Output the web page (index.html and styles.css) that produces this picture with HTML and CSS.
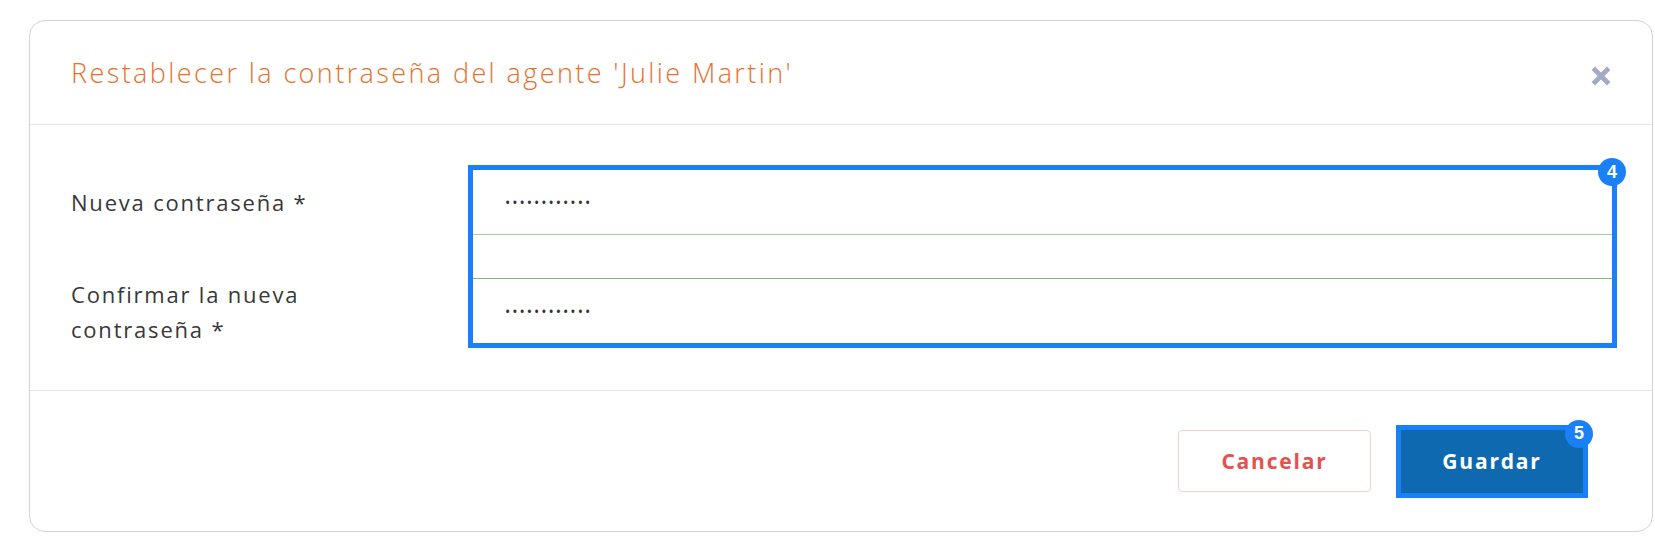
FILE: index.html
```html
<!DOCTYPE html>
<html lang="es">
<head>
  <meta charset="UTF-8">
  <title>Restablecer contraseña</title>
  <link rel="stylesheet" href="styles.css">
</head>
<body>
  <div class="modal">
    <div class="modal-header">
      <h3 class="modal-title">Restablecer la contraseña del agente 'Julie Martin'</h3>
      <button class="close-btn" title="Cerrar">
        <svg width="20" height="20" viewBox="0 0 20 20"><path d="M4 4 L16 16 M16 4 L4 16" stroke="#a2a9c9" stroke-width="4.8" stroke-linecap="square"/></svg>
      </button>
    </div>

    <div class="modal-body">
      <div class="labels">
        <label for="pass1">Nueva contraseña *</label>
        <span></span>
        <label for="pass2">Confirmar la nueva<br>contraseña *</label>
      </div>
      <div class="fields highlight">
        <input type="password" id="pass1" class="pass-input" value="abcdefghijkl">
        <div class="field-gap"></div>
        <input type="password" id="pass2" class="pass-input" value="abcdefghijkl">
        <span class="step step-fields">4</span>
      </div>
    </div>

    <div class="modal-footer">
      <button class="btn btn-cancel">Cancelar</button>
      <div class="highlight">
        <button class="btn btn-save">Guardar</button>
        <span class="step step-save">5</span>
      </div>
    </div>
  </div>
</body>
</html>
```

FILE: styles.css
```css
body { margin: 0; background: #fff; font-family: "Open Sans", "Liberation Sans", sans-serif; }

.modal { margin: 20px 2px 0 29px; border: 1px solid #d3d3d3; border-radius: 16px; background: #fff; }

.modal-header { height: 103px; display: flex; align-items: center; justify-content: space-between; padding: 0 41px 0 41px; border-bottom: 1px solid #e6e6e6; }
.modal-title { margin: 0; font-size: 27px; font-weight: 300; color: #e5712f; letter-spacing: 2.4px; }
.close-btn { background: none; border: none; padding: 0; margin-top: 6px; cursor: pointer; display: flex; }

.modal-body { display: grid; grid-template-columns: 397px 1fr; padding: 40px 35px 42px 41px; border-bottom: 1px solid #e3e3e3; }
.labels { display: grid; grid-template-rows: 65px 44px 65px; padding-top: 5px; align-items: center; }
.labels label { font-size: 22px; line-height: 35px; color: #383838; letter-spacing: 1.8px; }

.highlight { position: relative; border: 5px solid #1a80f6; }
.fields { display: flex; flex-direction: column; }
.pass-input { height: 64px; border: none; border-bottom: 1px solid #9fd19a; padding: 0 0 0 32px; font-size: 14px; letter-spacing: 2px; color: #333; outline: none; font-family: inherit; }
.field-gap { height: 43px; border-bottom: 1px solid #79bf73; }
.fields .pass-input:last-of-type { border-bottom: none; }

.step { position: absolute; width: 28px; height: 28px; border-radius: 50%; background: #1a80f6; color: #fff; font-size: 18px; font-weight: 700; display: flex; align-items: center; justify-content: center; font-family: "Liberation Sans", sans-serif; }
.step-fields { top: -12px; right: -14px; }
.step-save { top: -10px; right: -10px; }

.modal-footer { height: 140px; display: flex; align-items: center; justify-content: flex-end; gap: 25px; padding-right: 64px; }
.btn { font-family: inherit; font-size: 21px; font-weight: 700; letter-spacing: 1.8px; cursor: pointer; }
.btn-cancel { width: 193px; height: 62px; background: #fff; color: #e4514f; border: 1px solid #f5cfcf; border-radius: 4px; }
.btn-save { display: block; width: 182px; height: 63px; background: #0f69b1; color: #fff; border: none; }
```
